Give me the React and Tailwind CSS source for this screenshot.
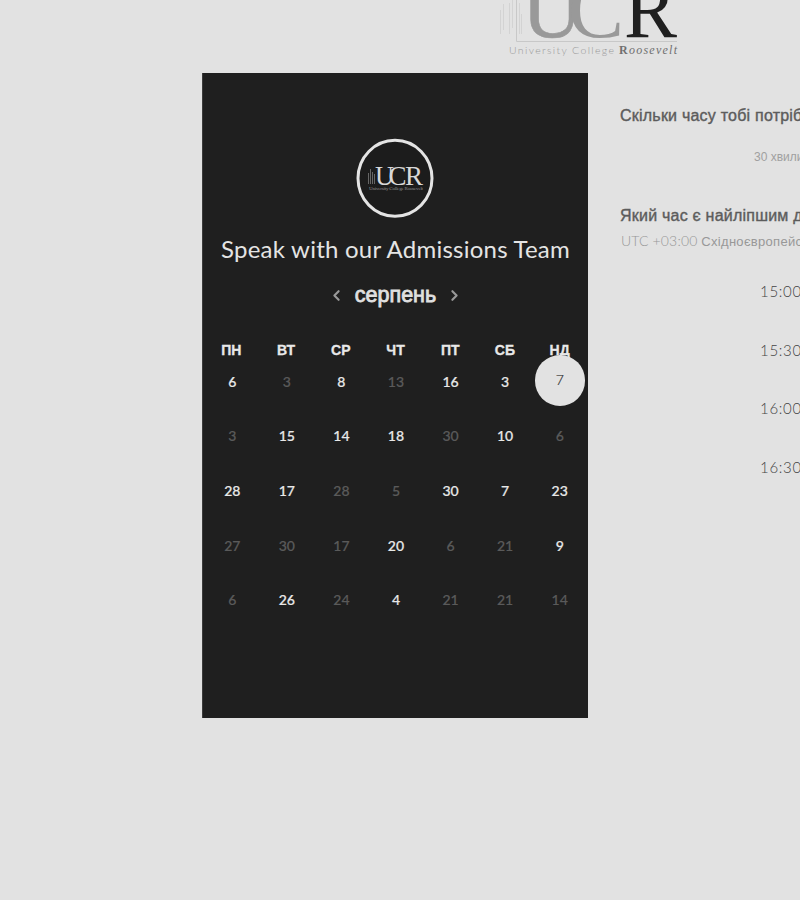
import { ChevronLeft, ChevronRight } from "lucide-react";

const weekdays = ["ПН", "ВТ", "СР", "ЧТ", "ПТ", "СБ", "НД"];

// Negative numbers are unavailable days.
const days = [
  6, -3, 8, -13, 16, 3, 7,
  -3, 15, 14, 18, -30, 10, -6,
  28, 17, -28, -5, 30, 7, 23,
  -27, -30, -17, 20, -6, -21, 9,
  -6, 26, -24, 4, -21, -21, -14,
];
const selected = 6;

const times = ["15:00", "15:30", "16:00", "16:30"];

function Logo() {
  return (
    <svg className="block ml-[495px]" width="190" height="73" viewBox="495 0 190 73">
      <g fill="none" stroke="#d3d3d3" strokeWidth="1">
        <path d="M500.500 10v24M503.500 4v26M509.500 3v31M512.500 0v28M519.500 3v31M521.500 14v20" />
        <path d="M516.500 0V41.500H677" stroke="#c8c8c8" />
      </g>
      <g fontFamily="Liberation Serif, serif" fontSize="82">
        <text x="522" y="37" fill="#999999" stroke="#999999" strokeWidth="0.600" textLength="60" lengthAdjust="spacingAndGlyphs">U</text>
        <text x="568" y="37" fill="#999999" textLength="56" lengthAdjust="spacingAndGlyphs">C</text>
        <text x="624" y="37" fill="#202020" textLength="53" lengthAdjust="spacingAndGlyphs">R</text>
      </g>
      <text x="509" y="54" fontFamily="Lato, sans-serif" fontWeight="300" fontSize="10.500" fill="#989898" textLength="105">University College</text>
      <text x="619" y="54" fontFamily="Liberation Serif, serif" fontSize="12" fill="#707070" textLength="58">
        <tspan fontWeight="700">R</tspan>
        <tspan fontStyle="italic">oosevelt</tspan>
      </text>
    </svg>
  );
}

function Avatar() {
  return (
    <svg className="-ml-[2px] block" width="78" height="80" viewBox="356 138 78 80">
      <ellipse cx="395" cy="178.300" rx="37" ry="38" fill="#1c1c1c" stroke="#e4e4e4" strokeWidth="3" />
      <path d="M368.500 173v11M370.500 169v15M372.500 172v12M374.500 174v10" stroke="#666" strokeWidth="1" />
      <g fontFamily="Liberation Serif, serif" fontSize="27" fill="#d8d8d8">
        <text x="375" y="185" textLength="19" lengthAdjust="spacingAndGlyphs">U</text>
        <text x="388.500" y="185" textLength="18" lengthAdjust="spacingAndGlyphs">C</text>
        <text x="405" y="185" textLength="18" lengthAdjust="spacingAndGlyphs">R</text>
      </g>
      <text x="369" y="190" fontFamily="Liberation Serif, serif" fontSize="5" fill="#909090" textLength="54">University College Roosevelt</text>
    </svg>
  );
}

function Day({ value, active }) {
  if (active) {
    return (
      <div className="relative flex h-[54.600px] items-center justify-center">
        <span className="-mt-[2px] flex h-[51px] w-[50px] shrink-0 items-center justify-center rounded-full bg-[#e2e2e2] pb-[1px] font-light text-[#333]">
          {value}
        </span>
      </div>
    );
  }
  return (
    <div
      className={
        value < 0
          ? "flex h-[54.600px] items-center justify-center text-[#5a5a5a]"
          : "flex h-[54.600px] items-center justify-center text-[#e8e8e8]"
      }
    >
      {Math.abs(value)}
    </div>
  );
}

export default function App() {
  return (
    <div className="h-[900px] w-[800px] overflow-hidden bg-[#e2e2e2] font-['Liberation_Sans',sans-serif]">
      <header className="h-[73px]">
        <Logo />
      </header>
      <main className="flex w-[1100px] items-start pl-[202px]">
        <section className="flex h-[645px] w-[386px] shrink-0 flex-col items-center border-l border-[#3c3c3c] bg-[#1f1f1f] pt-[65px]">
          <Avatar />
          <h1 className="mt-[14px] whitespace-nowrap font-[Lato,sans-serif] text-[24px] leading-[34px] tracking-[0.240px] text-[#e4e4e4]">
            Speak with our Admissions Team
          </h1>
          <div className="mt-[14px] flex h-[30px] items-center gap-[10px] text-[#e0e0e0]">
            <ChevronLeft className="h-[17px] w-[17px] text-[#999]" strokeWidth={3} />
            <span className="text-[21.500px] font-normal leading-[30px] [-webkit-text-stroke:0.800px_#e0e0e0]">серпень</span>
            <ChevronRight className="h-[17px] w-[17px] text-[#999]" strokeWidth={3} />
          </div>
          <div className="mt-[30px] grid w-[383px] grid-cols-7 text-center text-[14px] font-bold leading-[20px] text-[#e8e8e8] [-webkit-text-stroke:0.300px_#e8e8e8]">
            {weekdays.map((d) => (
              <span key={d}>{d}</span>
            ))}
          </div>
          <div className="-mt-[6px] grid w-[383px] grid-cols-7 pl-[1px] font-[Lato,sans-serif] text-[14px] font-medium [-webkit-text-stroke:0.200px_currentColor]">
            {days.map((d, i) => (
              <Day key={i} value={d} active={i === selected} />
            ))}
          </div>
        </section>
        <section className="ml-[31px] w-[440px] shrink-0 whitespace-nowrap pt-[33px] text-[#5c5c5c]">
          <h2 className="pl-[1px] text-[16px] leading-[20px] tracking-[0.220px] [-webkit-text-stroke:0.400px_#5c5c5c]">Скільки часу тобі потрібно?</h2>
          <p className="mt-[21px] pl-[135px] text-[12px] leading-[20px] text-[#a0a0a0]">30 хвилин</p>
          <h2 className="mt-[39px] pl-[1px] text-[16px] leading-[20px] tracking-[0.220px] [-webkit-text-stroke:0.400px_#5c5c5c]">Який час є найліпшим для тебе?</h2>
          <p className="mt-[5px] pl-[2px] text-[14px] leading-[20px] text-[#989898]">
            <span className="font-[Lato,sans-serif] font-light tracking-[0.150px]">UTC +03:00</span>{" "}
            <span className="text-[13px] tracking-[0.300px]">Східноєвропейський час</span>
          </p>
          <ul className="mt-[10px] pl-[141px] font-[Lato,sans-serif] text-[15px] font-light tracking-[0.700px] text-[#444]">
            {times.map((t) => (
              <li key={t} className="flex h-[58.600px] items-center">{t}</li>
            ))}
          </ul>
        </section>
      </main>
    </div>
  );
}
